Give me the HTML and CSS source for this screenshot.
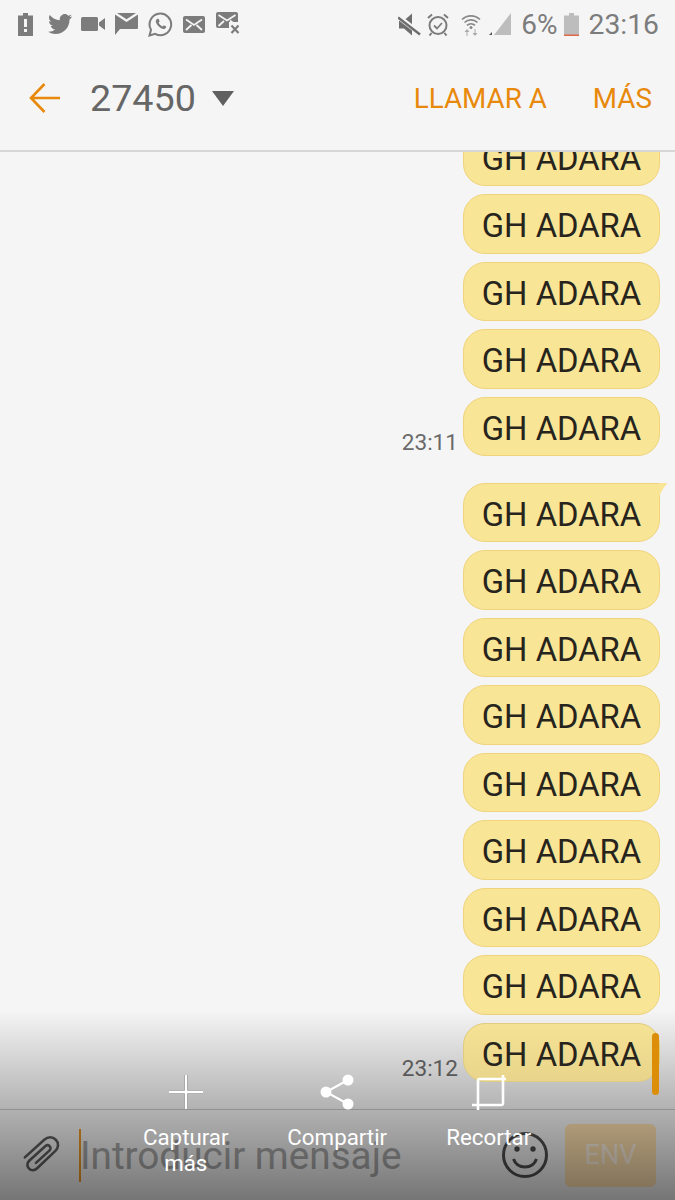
FILE: index.html
```html
<!DOCTYPE html>
<html lang="es">
<head>
<meta charset="utf-8">
<title>27450</title>
<link rel="stylesheet" href="styles.css">
</head>
<body>
<div class="phone">
  <header class="header">
    <div class="status">
      <div class="status-left">
        <svg class="ic" width="15" height="23" viewBox="0 0 15 23"><path d="M5 0h5v2.500h5V23H0V2.500h5z" fill="#7c7c7c"/><rect x="6" y="6" width="3" height="8" fill="#f5f5f5"/><rect x="6" y="16" width="3" height="3" fill="#f5f5f5"/></svg>
        <svg class="ic ic-bird" width="24" height="20" viewBox="0 0 24 20"><path d="M24 2.400c-.9.400-1.800.700-2.800.800 1-.600 1.800-1.600 2.200-2.700-.9.600-2 1-3.100 1.200A4.900 4.900 0 0 0 11.900 6.200C7.800 6 4.200 4 1.700.900.400 3.200 1 6 3.200 7.500c-.8 0-1.600-.2-2.200-.6 0 2.400 1.700 4.400 3.900 4.900-.7.2-1.500.2-2.200.1.600 2 2.400 3.400 4.600 3.400A9.900 9.900 0 0 1 0 17.800 14 14 0 0 0 7.500 20c9.100 0 14.300-7.700 14-14.600 1-.7 1.800-1.600 2.500-3z" fill="#7c7c7c"/></svg>
        <svg class="ic" width="24" height="14" viewBox="0 0 24 14"><rect width="17" height="14" rx="1.500" fill="#7c7c7c"/><path d="M18 5.500 24 1v12l-6-4.500z" fill="#7c7c7c"/></svg>
        <svg class="ic" width="23" height="22" viewBox="0 0 23 22"><path d="M0 1.500 11.500 9 23 1.500V15a1 1 0 0 1-1 1H5l-5 6z" fill="#7c7c7c"/><path d="M2 0h19l-9.500 6.200z" fill="#7c7c7c"/></svg>
        <svg class="ic" width="25" height="25" viewBox="0 0 25 25"><path d="M1.500 23.500 3 17.800a10.800 10.800 0 1 1 4.200 4.100z" fill="none" stroke="#7c7c7c" stroke-width="2"/><path d="M9 7c-1 .800-1.500 2-1 3.500 1 2.800 3.500 5.300 6.300 6.300 1.500.500 2.800 0 3.700-1 .300-.500.300-1 .100-1.300l-2.300-1.200-1.200 1.300c-1.700-.7-3.300-2.300-4-4l1.100-1.100-1-2.500c-.5-.5-1.200-.5-1.700 0z" fill="#7c7c7c"/></svg>
        <svg class="ic" width="22" height="17" viewBox="0 0 22 17"><rect width="22" height="17" rx="2" fill="#7c7c7c"/><path d="M3 3.500 11 9l8-5.500M3 14l5.500-5M19 14l-5.500-5" fill="none" stroke="#f5f5f5" stroke-width="1.800"/></svg>
        <svg class="ic ic-low" width="25" height="23" viewBox="0 0 25 23"><rect width="22" height="16" rx="2" fill="#7c7c7c"/><path d="M2.500 3 11 8.500 19.500 3M2.500 14l5.500-5M14 8.500l5 4" fill="none" stroke="#f5f5f5" stroke-width="1.800"/><path d="M13 10h12v13H13z" fill="#f5f5f5"/><path d="M15.500 13.500l7 7.500M22.500 13.500l-7 7.500" stroke="#7c7c7c" stroke-width="2.200"/></svg>
      </div>
      <div class="status-right">
        <svg class="ic ic-mute" width="23" height="23" viewBox="0 0 23 23"><path d="M1 7.500h5L14 .5v22l-8-7H1z" fill="#6e6e6e"/><path d="M0 3.500 22 20.500" stroke="#f5f5f5" stroke-width="5"/><path d="M0 4.500 22 21.500" stroke="#6e6e6e" stroke-width="2.500"/></svg>
        <svg class="ic ic-alarm" width="22" height="23" viewBox="0 0 22 23"><circle cx="11" cy="12.500" r="8.500" fill="none" stroke="#7c7c7c" stroke-width="2"/><path d="M7 12.500l3 3 5-5.500" fill="none" stroke="#7c7c7c" stroke-width="1.800"/><path d="M1 5 5 1.500M21 5l-4-3.500M4.500 20l-2 2.500M17.500 20l2 2.500" stroke="#7c7c7c" stroke-width="2"/></svg>
        <svg class="ic ic-wifi" width="20" height="23" viewBox="0 0 20 23"><path d="M1 6.500a13 13 0 0 1 18 0M3.500 9.500a9.500 9.500 0 0 1 13 0M6 12.300a6 6 0 0 1 8 0" fill="none" stroke="#888" stroke-width="1.700"/><circle cx="10" cy="14.500" r="1.500" fill="#888"/><path d="M5.500 23v-4H3.500L6 16l2.500 3h-2v4zM13.500 16v4h-2l2.500 3 2.500-3h-2v-4z" fill="#aaa"/></svg>
        <svg class="ic ic-signal" width="22" height="22" viewBox="0 0 22 22"><path d="M22 0v22H5z" fill="#bdbdbd"/><path d="M0 22l3-3v3z" fill="#555"/></svg>
        <span class="pct">6%</span>
        <svg class="ic ic-batt" width="15" height="23" viewBox="0 0 15 23"><path d="M5 0h5v2.500h5V23H0V2.500h5z" fill="#bdbdbd"/><rect y="21.500" width="15" height="1.500" fill="#e0694a"/></svg>
        <span class="clock">23:16</span>
      </div>
    </div>
    <div class="toolbar">
      <svg class="back" width="32" height="32" viewBox="0 0 32 32"><path d="M31 16H3M15.500 2 2 16l13.500 14" fill="none" stroke="#e8890c" stroke-width="2.600"/></svg>
      <span class="title">27450</span>
      <span class="tri"></span>
      <span class="spacer"></span>
      <span class="action">LLAMAR A</span>
      <span class="action">MÁS</span>
    </div>
  </header>

  <main class="thread">
    <div class="row"><div class="bubble">GH ADARA</div></div>
    <div class="row"><div class="bubble">GH ADARA</div></div>
    <div class="row"><div class="bubble">GH ADARA</div></div>
    <div class="row"><div class="bubble">GH ADARA</div></div>
    <div class="row"><time class="stamp">23:11</time><div class="bubble">GH ADARA</div></div>
    <div class="row row-first"><div class="bubble bubble-tail">GH ADARA</div></div>
    <div class="row"><div class="bubble">GH ADARA</div></div>
    <div class="row"><div class="bubble">GH ADARA</div></div>
    <div class="row"><div class="bubble">GH ADARA</div></div>
    <div class="row"><div class="bubble">GH ADARA</div></div>
    <div class="row"><div class="bubble">GH ADARA</div></div>
    <div class="row"><div class="bubble">GH ADARA</div></div>
    <div class="row"><div class="bubble">GH ADARA</div></div>
    <div class="row"><time class="stamp">23:12</time><div class="bubble bubble-last">GH ADARA</div></div>
  </main>

  <footer class="composer">
    <svg class="clip" width="37" height="39" viewBox="0 0 40 42"><path d="M2 23 23 4c4-3.500 9-3.500 12.500 0s3 8.500-.5 12L15 35c-2.500 2.300-6 2.500-8.500.2s-2.300-6 .2-8.500L24 11c1.500-1.300 3.500-1.300 4.800 0s1.200 3.300-.3 4.700L14 29" fill="none" stroke="#5f5f5f" stroke-width="2.800" stroke-linecap="round"/></svg>
    <span class="caret"></span>
    <span class="placeholder">Introducir mensaje</span>
    <svg class="smile" width="48" height="48" viewBox="0 0 48 48"><circle cx="24" cy="24" r="21.500" fill="none" stroke="#4e4e4e" stroke-width="3"/><circle cx="16" cy="18" r="2.700" fill="#4e4e4e"/><circle cx="32" cy="18" r="2.700" fill="#4e4e4e"/><path d="M12.500 28c2 5.500 6.500 8 11.500 8s9.500-2.500 11.500-8" fill="none" stroke="#4e4e4e" stroke-width="3"/></svg>
    <button class="send">ENV</button>
  </footer>

  <div class="scrollbar"></div>
  <div class="shade"></div>

  <div class="capture">
    <div class="cap-item">
      <svg width="38" height="36" viewBox="0 0 38 36"><path d="M19 1v34M2 18h34" stroke="#9a9a9a" stroke-width="4"/><path d="M19 1v34M2 18h34" stroke="#fff" stroke-width="2.300"/></svg>
      <span class="cap-label">Capturar más</span>
    </div>
    <div class="cap-item">
      <svg width="38" height="36" viewBox="0 0 38 36"><path d="M30 6 8 18l22 12" fill="none" stroke="#fff" stroke-width="2"/><circle cx="30" cy="6" r="5.500" fill="#fff"/><circle cx="8" cy="18" r="5.500" fill="#fff"/><circle cx="30" cy="30" r="5.500" fill="#fff"/></svg>
      <span class="cap-label">Compartir</span>
    </div>
    <div class="cap-item">
      <svg width="38" height="36" viewBox="0 0 38 36"><path d="M2 31H31.500a1.500 1.500 0 0 0 1.500-1.500V1M8 36V6.500A1.500 1.500 0 0 1 9.500 5H36" fill="none" stroke="#fff" stroke-width="2.600"/></svg>
      <span class="cap-label">Recortar</span>
    </div>
  </div>
</div>
</body>
</html>
```

FILE: styles.css
```css
* { box-sizing: border-box; }
html, body { margin: 0; padding: 0; background: #f5f5f5; }
body { font-family: Roboto, "Liberation Sans", sans-serif; }

.phone {
  position: relative;
  width: 675px;
  height: 1200px;
  overflow: hidden;
  display: flex;
  flex-direction: column;
  background: #f5f5f5;
}

/* Header */
.header {
  height: 152px;
  flex: none;
  position: relative;
  z-index: 1;
  background: #f5f5f5;
  border-bottom: 2px solid #d6d6d6;
}
.status {
  height: 48px;
  padding: 0 16px 0 18px;
  display: flex;
  justify-content: space-between;
  align-items: center;
}
.status-left, .status-right { display: flex; align-items: center; }
.status-left { gap: 10px; }
.status-right { color: #7c7c7c; }
.ic { flex: none; display: block; }
.ic-bird { margin-left: 5px; margin-right: -1px; }
.ic-low { margin-top: -1px; margin-left: 1px; }
.ic-alarm { margin-left: 6px; }
.ic-wifi { margin-left: 12px; }
.ic-signal { margin-left: 8px; }
.pct { font-size: 28px; margin-left: 10px; }
.ic-batt { margin-left: 6px; }
.clock { font-size: 28.300px; margin-left: 10px; }

.toolbar {
  height: 100px;
  padding: 0 23px 0 29px;
  display: flex;
  align-items: center;
}
.back { flex: none; margin-right: 29px; }
.title { font-size: 37.700px; color: #666; }
.tri {
  margin-left: 16px;
  width: 0;
  height: 0;
  border-left: 11px solid transparent;
  border-right: 11px solid transparent;
  border-top: 15px solid #606060;
}
.spacer { flex: 1; }
.action { font-size: 27.800px; color: #e8890c; margin-left: 46px; }

/* Thread */
.thread {
  flex: 1;
  min-height: 0;
  margin-top: -25.500px;
  padding-right: 15px;
  display: flex;
  flex-direction: column;
  gap: 8px;
}
.row {
  display: flex;
  justify-content: flex-end;
  align-items: flex-end;
  gap: 5px;
}
.row-first { margin-top: 18.500px; }
.bubble {
  position: relative;
  width: 197px;
  height: 59.500px;
  border: 1px solid #efd47c;
  border-radius: 22px;
  background: #f9e596;
  color: #26241c;
  font-size: 32.800px;
  line-height: 62px;
  text-align: center;
}
.bubble-tail { border-top-right-radius: 0; }
.bubble-tail::after {
  content: "";
  position: absolute;
  top: -1px;
  right: -9px;
  width: 9px;
  height: 14px;
  background: #f9e596;
  clip-path: polygon(0 0, 100% 0, 72% 22%, 35% 55%, 0 100%);
}
.bubble-last {
  z-index: 2;
  background: linear-gradient(#f6e294, #e8d58b);
  border-color: #e0cc80;
}
.stamp { font-size: 22.600px; color: #6a6a6a; line-height: 26px; }

/* Composer */
.composer {
  height: 91px;
  flex: none;
  border-top: 1px solid #c8c8c8;
  padding: 0 19px 0 23px;
  display: flex;
  align-items: center;
  background: #f5f5f5;
}
.clip { flex: none; margin-right: 19px; }
.caret { flex: none; width: 2px; height: 53px; background: #f09a20; }
.placeholder { font-size: 38.700px; color: #a8a8a8; white-space: nowrap; margin-left: -1px; }
.smile { flex: none; margin-left: auto; margin-right: 16px; }
.send {
  flex: none;
  width: 91px;
  height: 63px;
  border: none;
  border-radius: 6px;
  background: #ffe1af;
  color: #fff4e4;
  font: 27px Roboto, "Liberation Sans", sans-serif;
  padding: 0;
}

/* Overlays */
.scrollbar {
  position: absolute;
  z-index: 3;
  right: 16px;
  top: 1033px;
  width: 7px;
  height: 62px;
  border-radius: 4px;
  background: #dd8e08;
}
.shade {
  position: absolute;
  z-index: 1;
  left: 0;
  right: 0;
  top: 1010px;
  bottom: 0;
  background: linear-gradient(rgba(0,0,0,0) 0, rgba(0,0,0,0.28) 100px, rgba(0,0,0,0.52) 190px);
}
.capture {
  position: absolute;
  z-index: 3;
  left: 110px;
  top: 1074px;
  display: flex;
}
.cap-item {
  width: 151.500px;
  display: flex;
  flex-direction: column;
  align-items: center;
}
.cap-label {
  margin-top: 14px;
  width: 108px;
  text-align: center;
  color: #fff;
  font-size: 22.300px;
  line-height: 26px;
}
```
